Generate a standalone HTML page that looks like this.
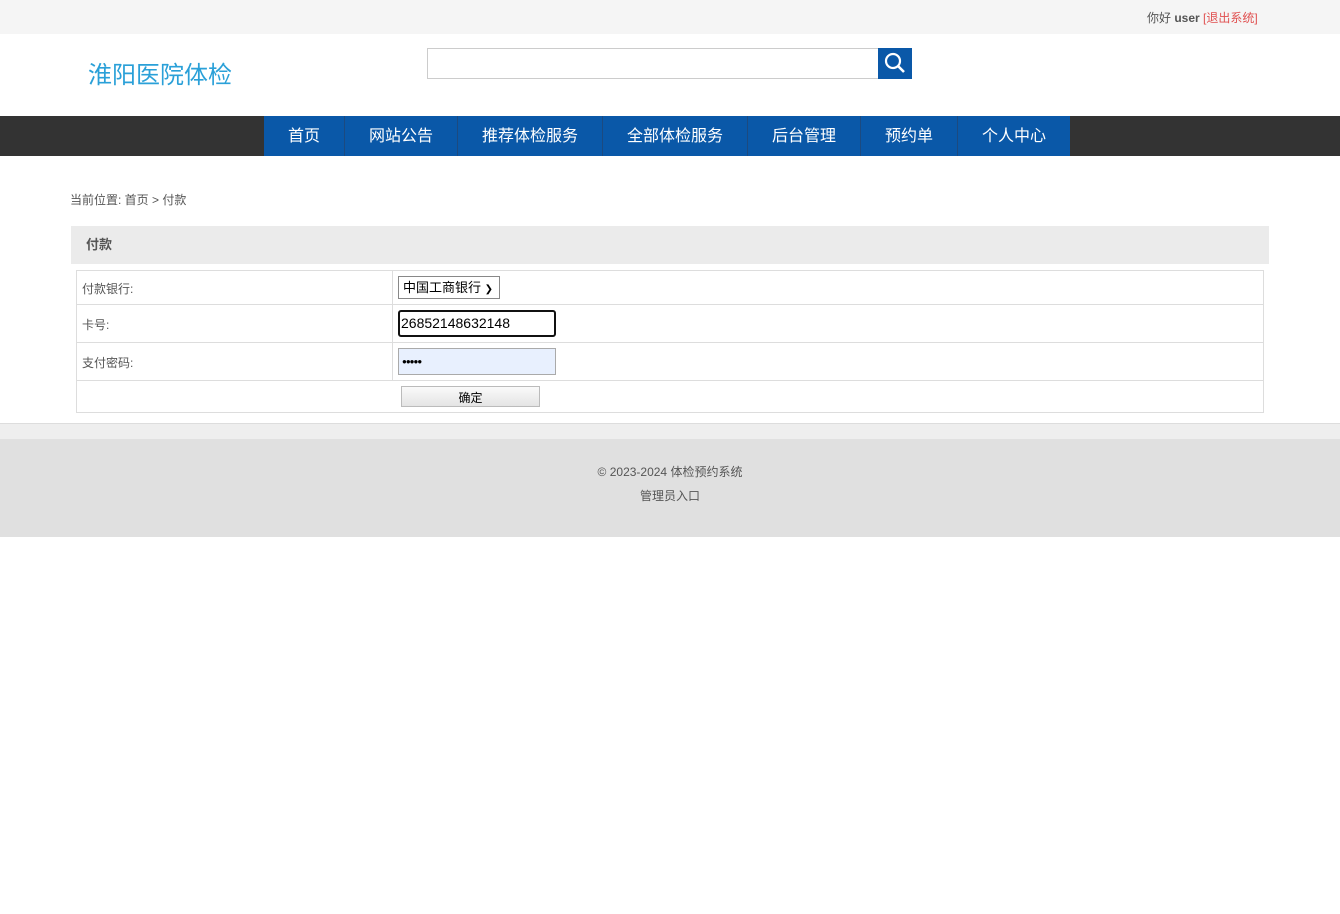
<!DOCTYPE html>
<html><head><meta charset="utf-8"><style>
*{box-sizing:border-box;margin:0;padding:0}
body{width:1340px;height:914px;background:#fff;font-family:"Liberation Sans","Noto Sans CJK SC",sans-serif;position:relative;overflow:hidden;color:#555}
.abs{position:absolute}
</style></head><body>
<div class="abs" style="left:0;top:0;width:1340px;height:34px;background:#f5f5f5"></div>
<div class="abs" style="left:1147px;top:9px;font-size:12px;color:#555;white-space:nowrap">你好 <b>user</b> <span style="color:#e05050">[退出系统]</span></div>
<div class="abs" style="left:88px;top:55px;font-size:24px;color:#2aa0d8;white-space:nowrap">淮阳医院体检</div>
<div class="abs" style="left:427px;top:48px;width:452px;height:31px;border:1px solid #ccc"></div>
<div class="abs" style="left:878px;top:48px;width:34px;height:31px;background:#0a58a8">
<svg width="34" height="31" viewBox="0 0 34 31"><circle cx="15" cy="13" r="7" fill="none" stroke="#fff" stroke-width="2.2"/><line x1="20" y1="18" x2="26" y2="24" stroke="#fff" stroke-width="2.6"/></svg></div>
<div class="abs" style="left:0;top:116px;width:1340px;height:40px;background:#333"></div>
<div class="abs" style="left:264px;top:116px;height:40px;display:flex;background:#0a58a8;color:#fff;font-size:16px">
<div style="width:81px;text-align:center;line-height:42px;border-right:1px solid #1c4a80">首页</div>
<div style="width:113px;text-align:center;line-height:42px;border-right:1px solid #1c4a80">网站公告</div>
<div style="width:145px;text-align:center;line-height:42px;border-right:1px solid #1c4a80">推荐体检服务</div>
<div style="width:145px;text-align:center;line-height:42px;border-right:1px solid #1c4a80">全部体检服务</div>
<div style="width:113px;text-align:center;line-height:42px;border-right:1px solid #1c4a80">后台管理</div>
<div style="width:97px;text-align:center;line-height:42px;border-right:1px solid #1c4a80">预约单</div>
<div style="width:112px;text-align:center;line-height:42px">个人中心</div>
</div>
<div class="abs" style="left:70px;top:191px;font-size:12px;color:#555;white-space:nowrap">当前位置: 首页 &gt; 付款</div>
<div class="abs" style="left:71px;top:226px;width:1198px;height:38px;background:#ebebeb;font-size:13px;font-weight:bold;color:#555;padding-left:15px;line-height:38px">付款</div>
<div class="abs" style="left:76px;top:270px;width:1188px;height:143px;border:1px solid #ddd"></div>
<div class="abs" style="left:77px;top:304px;width:1186px;height:1px;background:#ddd"></div>
<div class="abs" style="left:77px;top:342px;width:1186px;height:1px;background:#ddd"></div>
<div class="abs" style="left:77px;top:380px;width:1186px;height:1px;background:#ddd"></div>
<div class="abs" style="left:392px;top:271px;width:1px;height:109px;background:#ddd"></div>
<div class="abs" style="left:82px;top:280px;font-size:12px;color:#555">付款银行:</div>
<div class="abs" style="left:82px;top:316px;font-size:12px;color:#555">卡号:</div>
<div class="abs" style="left:82px;top:354px;font-size:12px;color:#555">支付密码:</div>
<div class="abs" style="left:398px;top:276px;width:102px;height:23px;border:1px solid #888;font-size:13px;color:#000;line-height:21px;padding-left:4px;white-space:nowrap">中国工商银行 <span style="font-size:10px">&#10095;</span></div>
<div class="abs" style="left:398px;top:310px;width:158px;height:27px;border:2px solid #111;border-radius:3px;font-size:14px;color:#000;line-height:23px;padding-left:1px">26852148632148</div>
<div class="abs" style="left:398px;top:348px;width:158px;height:27px;border:1px solid #aaa;background:#e8f0fe;font-size:8px;color:#000;line-height:25px;padding-left:3px;letter-spacing:-1px">●●●●●</div>
<div class="abs" style="left:401px;top:386px;width:139px;height:21px;border:1px solid #bbb;background:linear-gradient(#fafafa,#e4e4e4);font-size:12px;color:#000;text-align:center;line-height:23px">确定</div>
<div class="abs" style="left:0;top:423px;width:1340px;height:16px;background:#eee;border-top:1px solid #ddd"></div>
<div class="abs" style="left:0;top:439px;width:1340px;height:98px;background:#e0e0e0"></div>
<div class="abs" style="left:0;top:463px;width:1340px;text-align:center;font-size:12px;color:#555">© 2023-2024 体检预约系统</div>
<div class="abs" style="left:0;top:487px;width:1340px;text-align:center;font-size:12px;color:#555">管理员入口</div>
</body></html>
